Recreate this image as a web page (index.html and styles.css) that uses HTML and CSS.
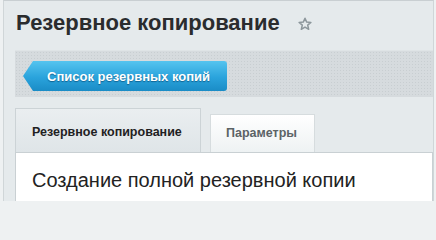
FILE: index.html
```html
<!DOCTYPE html>
<html lang="ru">
<head>
<meta charset="utf-8">
<title>Резервное копирование</title>
<link rel="stylesheet" href="styles.css">
</head>
<body>
<div class="frame">
  <div class="title-row">
    <h1 class="title">Резервное копирование</h1>
    <svg class="star" width="14" height="14" viewBox="0 0 14 14" aria-hidden="true">
      <path d="M7 1.2 L8.7 5.1 L12.9 5.4 L9.7 8.1 L10.7 12.3 L7 10.1 L3.3 12.3 L4.3 8.1 L1.1 5.4 L5.3 5.1 Z" fill="none" stroke="#8d979c" stroke-width="1.5" stroke-linejoin="round"/>
    </svg>
  </div>
  <div class="toolbar">
    <a class="btn-back">Список резервных копий</a>
  </div>
  <div class="tabs">
    <div class="tab tab-active">Резервное копирование</div>
    <div class="tab tab-inactive">Параметры</div>
  </div>
  <div class="panel">
    <div class="panel-title">Создание полной резервной копии</div>
  </div>
</div>
</body>
</html>
```
FILE: styles.css
```css
html, body {
  margin: 0;
  padding: 0;
  background: #eef1f2;
}
body {
  font-family: "Liberation Sans", Arial, sans-serif;
  width: 436px;
  height: 201px;
  overflow: hidden;
}
.frame {
  margin: 0 2px 0 3px;
  height: 201px;
  box-sizing: border-box;
  border-left: 1px solid #d0d6d8;
  border-right: 1px solid #d0d6d8;
  border-top: 1px solid #c9cfd2;
  background: #e5eaec;
  padding-left: 11px;
}
.title-row {
  display: flex;
  align-items: flex-start;
  padding-top: 10px;
  height: 39px;
}
.title {
  margin: 0 0 0 1px;
  font-size: 22px;
  line-height: 24px;
  font-weight: bold;
  color: #2a2c2e;
}
.star {
  margin-left: 18px;
  margin-top: 6px;
}
.toolbar {
  height: 47px;
  box-sizing: border-box;
  padding: 10px 0 0 8px;
  background-color: #d6dbde;
  background-image: radial-gradient(#c8ced1 0.8px, transparent 1px);
  background-size: 3px 3px;
  border-top: 1px solid #dfe4e6;
}
.btn-back {
  display: inline-flex;
  align-items: center;
  width: 204px;
  height: 30px;
  box-sizing: border-box;
  padding-left: 24px;
  color: #fff;
  font-size: 13px;
  font-weight: bold;
  text-shadow: 0 1px 1px rgba(0, 60, 100, 0.6);
  background: linear-gradient(#55c4ef, #2aa3dc 55%, #1a8cc6);
  border-radius: 0 3px 3px 0;
  clip-path: polygon(10px 0, 100% 0, 100% 100%, 10px 100%, 0 50%);
}
.tabs {
  display: flex;
  align-items: flex-end;
  gap: 9px;
  margin-top: 11px;
  height: 44px;
}
.tab {
  box-sizing: border-box;
  font-size: 12.5px;
  font-weight: bold;
  border: 1px solid #ccd3d6;
  border-bottom: none;
}
.tab-active {
  width: 186px;
  height: 44px;
  padding: 16px 0 0 16px;
  color: #1f2122;
  background: linear-gradient(#eaeef0, #dfe5e8);
}
.tab-inactive {
  width: 105px;
  height: 38px;
  padding: 11px 0 0 15px;
  color: #5c6366;
  background: linear-gradient(#ffffff, #eef2f3);
  border-color: #d6dcde;
}
.panel {
  height: 49px;
  box-sizing: border-box;
  background: #fff;
  border: 1px solid #c9d0d3;
  border-bottom: none;
  padding: 15px 0 0 16px;
}
.panel-title {
  font-size: 20px;
  line-height: 24px;
  color: #222;
}
```
